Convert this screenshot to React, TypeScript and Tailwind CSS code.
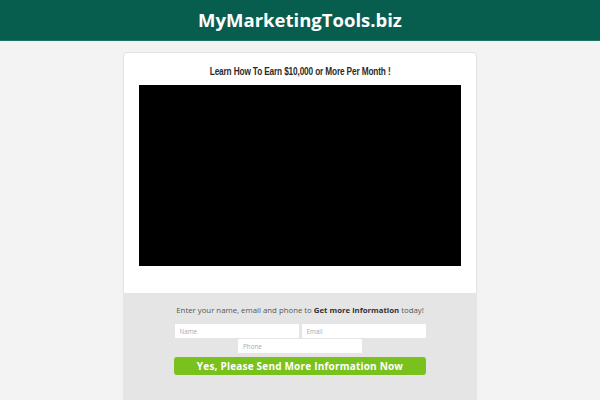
export default function App() {
  return (
    <div className="min-h-[400px] bg-[#f3f3f3] font-['Open_Sans',sans-serif]">
      {/* Header */}
      <header className="h-[41px] bg-[#075e4f] border-b border-[#1b7362] flex items-center justify-center">
        <h1 className="text-white font-bold text-[18.5px] leading-none">MyMarketingTools.biz</h1>
      </header>

      {/* Card */}
      <div className="w-[354px] mx-auto mt-[11px] bg-white border border-[#e2e2e2] rounded-[4px] overflow-hidden">
        <div className="pt-[10px] pb-[27px] px-[15px]">
          <div className="flex justify-center h-[16px] items-center">
            <h2 className="inline-block whitespace-nowrap scale-x-[0.7] text-[11.8px] leading-[16px] font-bold text-[#2a2a2a] tracking-[-0.2px] font-['Liberation_Sans',sans-serif]">
              Learn How To Earn $10,000 or More Per Month !
            </h2>
          </div>
          <div className="mt-[6px] h-[181px] bg-black" />
        </div>

        <div className="bg-[#e5e5e5] pt-[10px] pb-[30px] flex flex-col items-center">
          <p className="text-[7.8px] leading-[14px] text-[#555]">
            Enter your name, email and phone to <span className="font-bold text-[#333]">Get more information</span> today!
          </p>
          <div className="mt-[7px] flex gap-[3px]">
            <input
              placeholder="Name"
              className="w-[124px] h-[14px] bg-white px-[5px] text-[6.3px] text-[#333] placeholder:text-[#aaa] outline-none rounded-[1px]"
            />
            <input
              placeholder="Email"
              className="w-[124px] h-[14px] bg-white px-[5px] text-[6.3px] text-[#333] placeholder:text-[#aaa] outline-none rounded-[1px]"
            />
          </div>
          <input
            placeholder="Phone"
            className="mt-[1px] w-[124px] h-[14px] bg-white px-[5px] text-[6.3px] text-[#333] placeholder:text-[#aaa] outline-none rounded-[1px]"
          />
          <button className="mt-[4px] w-[252px] h-[18px] rounded-[3px] bg-[#79c11d] text-white font-bold text-[10px] leading-none tracking-[0.2px]">
            Yes, Please Send More Information Now
          </button>
        </div>
      </div>
    </div>
  );
}
